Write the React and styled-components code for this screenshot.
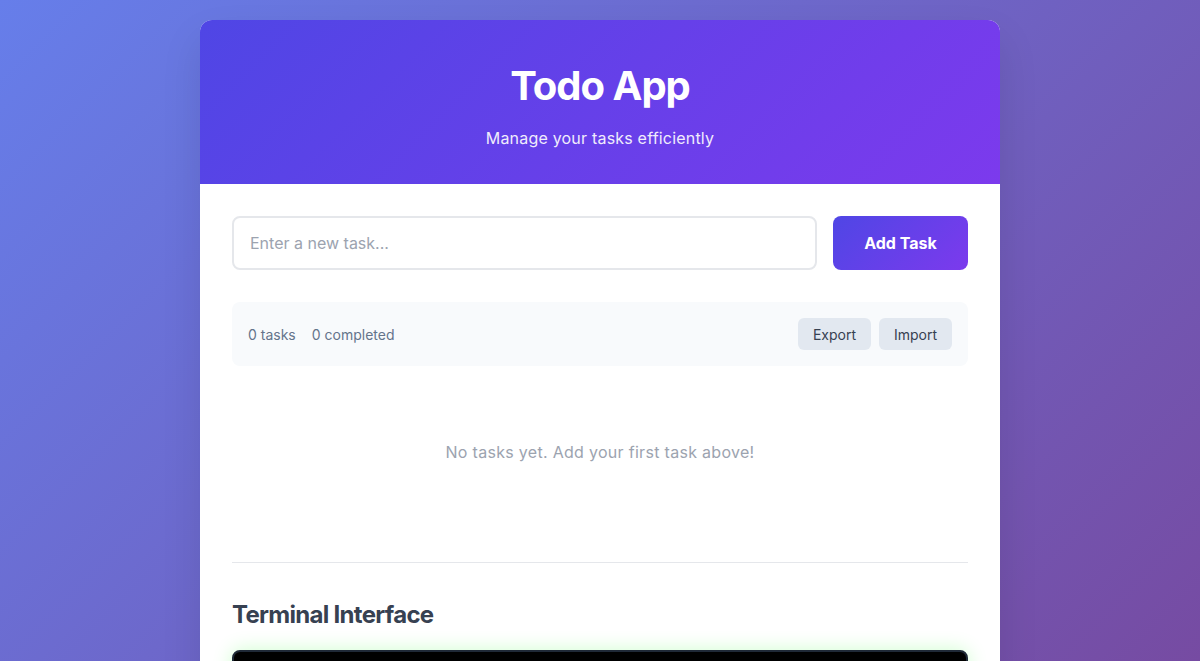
import React, { useState } from 'react';
import styled, { createGlobalStyle } from 'styled-components';

const GlobalStyle = createGlobalStyle`
  * { box-sizing: border-box; }
  html, body { margin: 0; padding: 0; }
  body {
    font-family: Inter, "Noto Sans", sans-serif;
    min-height: 100vh;
    background: linear-gradient(135deg, #667eea 0%, #764ba2 100%);
    background-attachment: fixed;
  }
`;

const Page = styled.div`
  padding: 20px;
  display: flex;
  justify-content: center;
`;

const Card = styled.main`
  width: 800px;
  background: #fff;
  border-radius: 12px;
  overflow: hidden;
  box-shadow: 0 20px 40px rgba(0, 0, 0, 0.1);
`;

const Header = styled.header`
  background: linear-gradient(135deg, #4f46e5 0%, #7c3aed 100%);
  color: #fff;
  text-align: center;
  padding: 42px 32px 34px;
`;

const Title = styled.h1`
  margin: 0 0 16px;
  font-size: 40px;
  font-weight: 700;
  line-height: 1.2;
  letter-spacing: -1px;
`;

const Subtitle = styled.p`
  margin: 0;
  font-size: 16px;
  line-height: 1.5;
  letter-spacing: 0.2px;
  opacity: 0.9;
`;

const Body = styled.section`
  padding: 32px;
`;

const AddRow = styled.form`
  display: flex;
  gap: 16px;
  margin-bottom: 32px;
`;

const TaskInput = styled.input`
  flex: 1;
  height: 54px;
  padding: 0 16px;
  border: 2px solid #e5e7eb;
  border-radius: 8px;
  font-family: inherit;
  font-size: 16px;
  color: #111827;
  outline: none;
  &::placeholder { color: #9ca3af; }
`;

const AddButton = styled.button`
  width: 135px;
  height: 54px;
  border: none;
  border-radius: 8px;
  background: linear-gradient(135deg, #4f46e5 0%, #7c3aed 100%);
  color: #fff;
  font-family: inherit;
  font-size: 16px;
  font-weight: 700;
  cursor: pointer;
`;

const StatsBar = styled.div`
  display: flex;
  align-items: center;
  justify-content: space-between;
  height: 64px;
  padding: 0 16px;
  background: #f8fafc;
  border-radius: 8px;
`;

const Stats = styled.div`
  display: flex;
  gap: 16px;
  font-size: 14px;
  color: #64748b;
`;

const Actions = styled.div`
  display: flex;
  gap: 8px;
`;

const SmallButton = styled.button`
  width: 73px;
  height: 32px;
  padding: 0;
  border: none;
  border-radius: 6px;
  background: #e2e8f0;
  color: #374151;
  font-family: inherit;
  font-size: 14px;
  cursor: pointer;
`;

const Empty = styled.p`
  margin: 0;
  padding: 76px 0 100px;
  text-align: center;
  font-size: 16px;
  line-height: 20px;
  letter-spacing: 0.3px;
  color: #9ca3af;
`;

const TerminalSection = styled.section`
  border-top: 1px solid #e5e7eb;
  padding-top: 38px;
`;

const SectionTitle = styled.h2`
  margin: 0 0 20px;
  font-size: 24px;
  font-weight: 700;
  line-height: 1.2;
  letter-spacing: -0.7px;
  color: #374151;
`;

const Terminal = styled.div`
  height: 320px;
  background: #000;
  border: 2px solid #1f2937;
  border-radius: 8px;
  box-shadow: 0 0 20px rgba(0, 255, 0, 0.2);
`;

export default function App() {
  const [text, setText] = useState('');
  return (
    <>
      <GlobalStyle />
      <Page>
        <Card>
          <Header>
            <Title>Todo App</Title>
            <Subtitle>Manage your tasks efficiently</Subtitle>
          </Header>
          <Body>
            <AddRow onSubmit={(e) => e.preventDefault()}>
              <TaskInput
                placeholder="Enter a new task..."
                value={text}
                onChange={(e) => setText(e.target.value)}
              />
              <AddButton type="submit">Add Task</AddButton>
            </AddRow>
            <StatsBar>
              <Stats>
                <span>0 tasks</span>
                <span>0 completed</span>
              </Stats>
              <Actions>
                <SmallButton>Export</SmallButton>
                <SmallButton>Import</SmallButton>
              </Actions>
            </StatsBar>
            <Empty>No tasks yet. Add your first task above!</Empty>
            <TerminalSection>
              <SectionTitle>Terminal Interface</SectionTitle>
              <Terminal />
            </TerminalSection>
          </Body>
        </Card>
      </Page>
    </>
  );
}
